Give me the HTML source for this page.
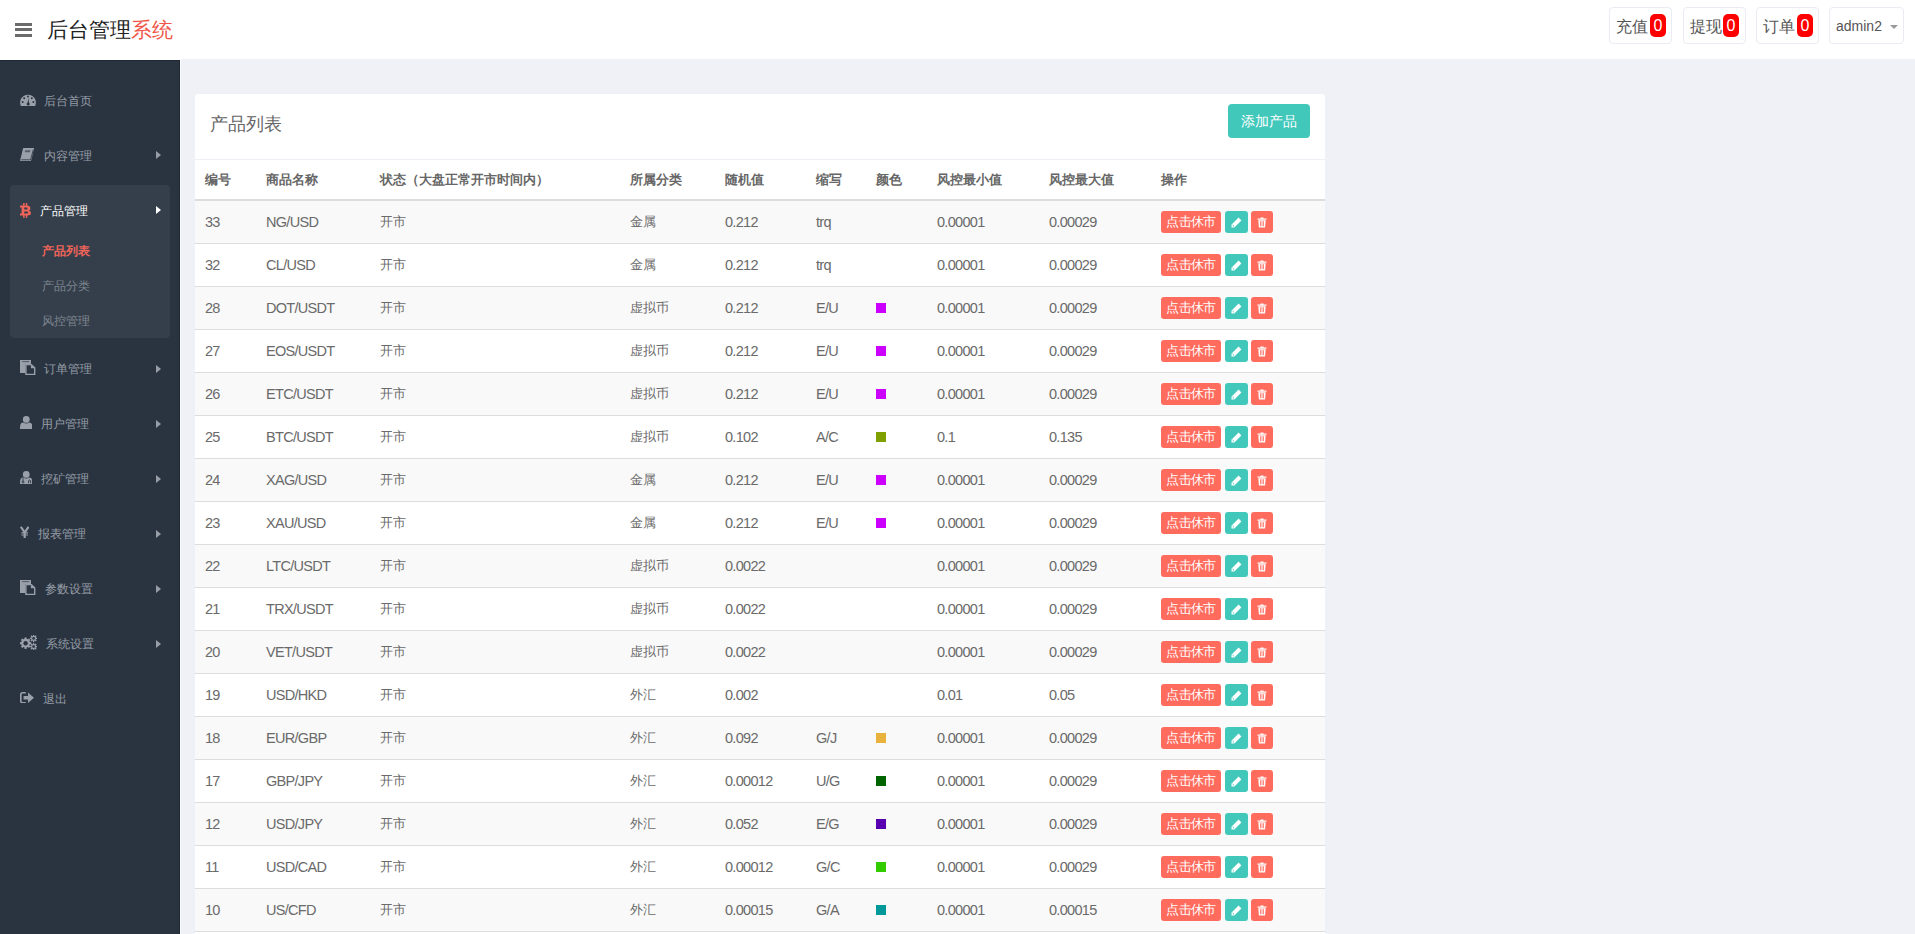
<!DOCTYPE html>
<html><head><meta charset="utf-8"><style>
*{margin:0;padding:0;box-sizing:border-box}
html,body{width:1915px;height:934px;overflow:hidden}
body{background:#f0f1f6;font-family:"Liberation Sans",sans-serif;color:#666;position:relative}
.hd{position:absolute;left:0;top:0;width:1915px;height:60px;background:#fff}
.hl{position:absolute;left:181px;top:59px;width:1734px;height:1px;background:#f0f1f6}
.vl{position:absolute;left:180px;top:60px;width:1px;height:874px;background:#fcfcff}
.bar{position:absolute;left:15px;width:17px;height:3px;background:#6b6b6b}
.title{position:absolute;left:47px;top:15px;font-size:21px;line-height:30px;color:#222;white-space:nowrap}
.title span{color:#f0574a}
.hbox{position:absolute;top:7px;height:37px;border:1px solid #ebebf3;border-radius:4px;background:#fff}
.ht{position:absolute;font-size:16px;line-height:20px;color:#555;white-space:nowrap}
.badge{position:absolute;top:14px;width:16px;height:23px;border-radius:5px;background:#f00;color:#fff;font-size:16px;line-height:23px;text-align:center}
.caret{position:absolute;left:1890px;top:25px;width:0;height:0;border-top:4px solid #999;border-left:4px solid transparent;border-right:4px solid transparent}
.sb{position:absolute;left:0;top:60px;width:180px;height:874px;background:#2a3440;border-top:1px solid #1f2935;border-right:1px solid #1f2935}
.mt{position:absolute;font-size:12px;line-height:20px;color:#969da7;white-space:nowrap}
.mt.on{color:#fff}
.ar.on{border-left-color:#fff}
.mt.sub{color:#7e8690}
.mt.sub.on{color:#f0645a;font-weight:bold}
.ar{position:absolute;left:156px;width:0;height:0;border-left:5px solid #979ea8;border-top:4px solid transparent;border-bottom:4px solid transparent}
.act{position:absolute;left:10px;top:185px;width:160px;height:153px;background:#353f4b;border-radius:4px}
.card{position:absolute;left:195px;top:94px;width:1130px;height:900px;background:#fff;border-radius:3px}
.ctitle{position:absolute;left:15px;top:18px;font-size:18px;line-height:24px;color:#666}
.addbtn{position:absolute;left:1033px;top:10px;width:82px;height:34px;background:#41c8bb;border-radius:4px;color:#fff;font-size:14px;line-height:34px;text-align:center}
.cline{position:absolute;left:0;top:65px;width:1130px;height:1px;background:#eef0f5}
table{position:absolute;left:0;top:66px;width:1130px;border-collapse:collapse;table-layout:fixed}
th,td{padding:0 0 0 10px;text-align:left;white-space:nowrap;overflow:hidden}
th{height:40px;font-size:13px;font-weight:bold;color:#666;border-bottom:2px solid #ddd;vertical-align:middle}
td{height:43px;font-size:14.5px;letter-spacing:-0.7px;color:#6a6a6a;border-bottom:1px solid #ddd;vertical-align:middle}
td.cn{font-size:13px;letter-spacing:0}
tbody tr:nth-child(odd) td{background:#f9f9f9}
.sw{display:inline-block;width:10px;height:10px;vertical-align:middle;position:relative;top:-1px}
.b1,.b2,.b3{display:inline-block;height:22px;border-radius:3px;vertical-align:middle;position:relative;color:#fff}
.b1{width:60px;background:#ff6b5d;font-size:12.5px;line-height:22px;text-align:center}
.b2{width:23px;background:#41c8bb;margin-left:4px}
.b3{width:22px;background:#ff6b5d;margin-left:3px}
</style></head><body>
<div class="hd">
<div class="bar" style="top:23px"></div><div class="bar" style="top:28.4px"></div><div class="bar" style="top:34px"></div>
<div class="title">后台管理<span>系统</span></div>
<div class="hbox" style="left:1609px;width:63px"></div><div class="ht" style="left:1616px;top:17px">充值</div><div class="badge" style="left:1650px">0</div>
<div class="hbox" style="left:1683px;width:63px"></div><div class="ht" style="left:1690px;top:17px">提现</div><div class="badge" style="left:1723px">0</div>
<div class="hbox" style="left:1756px;width:63px"></div><div class="ht" style="left:1763px;top:17px">订单</div><div class="badge" style="left:1797px">0</div>
<div class="hbox" style="left:1829px;width:75px"></div><div class="ht" style="left:1836px;top:16px;font-size:14px">admin2</div><div class="caret"></div>
</div>
<div class="hl"></div><div class="vl"></div><div class="sb"></div><div class="act"></div><svg style="position:absolute;left:19.6px;top:93.7px" width="16" height="12.4" viewBox="0 0 16 12.4"><path d="M1.1 12.4 A7.9 7.9 0 1 1 14.9 12.4 Z" fill="#99a0aa"/><circle cx="8" cy="2.6" r="1" fill="#2a3440"/><circle cx="4.2" cy="4.3" r="1" fill="#2a3440"/><circle cx="11.8" cy="4.3" r="1" fill="#2a3440"/><circle cx="2.6" cy="8" r="1" fill="#2a3440"/><circle cx="13.4" cy="8" r="1" fill="#2a3440"/><path d="M7.4 10 L8.6 3.8 L9 10 Z" fill="#2a3440"/><circle cx="8.2" cy="10" r="1.6" fill="#2a3440"/></svg><div class="mt" style="left:44px;top:91px">后台首页</div><svg style="position:absolute;left:19.6px;top:147.8px" width="14.4" height="13.3" viewBox="0 0 14.4 13.3"><path d="M3.6 0 H14.2 L11.3 12 Q10.9 13.3 9.8 13.3 H1.4 Q-0.1 13.3 0.3 11.8 L2.9 1 Q3.1 0 3.6 0 Z" fill="#99a0aa"/><path d="M1.4 11.8 H10.6 L13.3 1.6" stroke="#2a3440" stroke-width="0.8" fill="none"/><path d="M5.2 2.3 H10.5 L10.1 4.2 H4.8 Z" fill="#2a3440" opacity="0.6"/></svg><div class="mt" style="left:44px;top:146px">内容管理</div><div class="ar" style="top:151.3px"></div><svg style="position:absolute;left:20.1px;top:202.75px" width="11" height="14.9" viewBox="0 0 11 14.9"><path fill-rule="evenodd" d="M0 2.6 H6.6 Q10.4 2.6 10.4 5.4 Q10.4 7 9 7.5 Q11 8 11 10.2 Q11 12.4 7.2 12.4 H0 V10.6 H1.6 V4.4 H0 Z M4.2 4.6 V6.6 H6.4 Q7.6 6.6 7.6 5.6 Q7.6 4.6 6.4 4.6 Z M4.2 8.4 V10.4 H6.8 Q8.2 10.4 8.2 9.4 Q8.2 8.4 6.8 8.4 Z" fill="#f0645a"/><rect x="3.1" y="0" width="1.5" height="3" fill="#f0645a"/><rect x="5.8" y="0" width="1.5" height="3" fill="#f0645a"/><rect x="3.1" y="12" width="1.5" height="2.9" fill="#f0645a"/><rect x="5.8" y="12" width="1.5" height="2.9" fill="#f0645a"/></svg><div class="mt on" style="left:40px;top:201px">产品管理</div><div class="ar on" style="top:206.3px"></div><div class="mt sub on" style="left:42px;top:241px">产品列表</div><div class="mt sub" style="left:42px;top:276px">产品分类</div><div class="mt sub" style="left:42px;top:311px">风控管理</div><svg style="position:absolute;left:19.7px;top:359.6px" width="16" height="15.4" viewBox="0 0 16 15.4"><rect x="0" y="0" width="11" height="13" fill="#99a0aa"/><rect x="2.2" y="1.2" width="7" height="0.9" fill="#2a3440" opacity="0.7"/><path d="M5.2 3.9 H11.6 L15.4 7.6 V15.1 H5.2 Z" fill="#2a3440"/><path d="M5.9 4.6 H11.3 L14.7 7.9 V14.4 H5.9 Z" fill="none" stroke="#99a0aa" stroke-width="1.4"/><path d="M10.9 4.4 V8.3 H14.9 Z" fill="#99a0aa"/></svg><div class="mt" style="left:44px;top:359px">订单管理</div><div class="ar" style="top:364.5px"></div><svg style="position:absolute;left:19.6px;top:415.75px" width="12.5" height="13.4" viewBox="0 0 12.5 13.4"><circle cx="6.25" cy="3.4" r="3.4" fill="#99a0aa"/><path d="M0 11.4 Q0 6.6 3.2 6.6 Q6.25 8.4 9.3 6.6 Q12.5 6.6 12.5 11.4 V13.4 H0 Z" fill="#99a0aa"/></svg><div class="mt" style="left:41px;top:414px">用户管理</div><div class="ar" style="top:419.5px"></div><svg style="position:absolute;left:19.6px;top:470.75px" width="12.5" height="13.4" viewBox="0 0 12.5 13.4"><circle cx="6.25" cy="3.4" r="3.4" fill="#99a0aa"/><path d="M0 11.4 Q0 6.6 3.2 6.6 Q6.25 8.4 9.3 6.6 Q12.5 6.6 12.5 11.4 V13.4 H0 Z" fill="#99a0aa"/><path d="M3 7.2 V10.6" stroke="#2a3440" stroke-width="0.9" fill="none"/><circle cx="3" cy="11.1" r="1" fill="none" stroke="#2a3440" stroke-width="0.8"/><path d="M8.6 12.2 V9.6 Q9.6 8.6 10.6 9.6 V12.2" stroke="#2a3440" stroke-width="0.9" fill="none"/></svg><div class="mt" style="left:41px;top:469px">挖矿管理</div><div class="ar" style="top:474.5px"></div><svg style="position:absolute;left:19.6px;top:525.75px" width="9.4" height="12.3" viewBox="0 0 9.4 12.3"><path d="M0.8 0.8 L4.7 6.4 L8.6 0.8" stroke="#99a0aa" stroke-width="2.2" fill="none"/><path d="M4.7 6 V12.3" stroke="#99a0aa" stroke-width="2.2"/><path d="M1.4 6.9 H8 M1.4 9 H8" stroke="#99a0aa" stroke-width="1.2"/></svg><div class="mt" style="left:38px;top:524px">报表管理</div><div class="ar" style="top:529.5px"></div><svg style="position:absolute;left:19.6px;top:579.8px" width="16" height="15.4" viewBox="0 0 16 15.4"><rect x="0" y="0" width="11" height="13" fill="#99a0aa"/><rect x="2.2" y="1.2" width="7" height="0.9" fill="#2a3440" opacity="0.7"/><path d="M5.2 3.9 H11.6 L15.4 7.6 V15.1 H5.2 Z" fill="#2a3440"/><path d="M5.9 4.6 H11.3 L14.7 7.9 V14.4 H5.9 Z" fill="none" stroke="#99a0aa" stroke-width="1.4"/><path d="M10.9 4.4 V8.3 H14.9 Z" fill="#99a0aa"/></svg><div class="mt" style="left:45px;top:579px">参数设置</div><div class="ar" style="top:584.5px"></div><svg style="position:absolute;left:19.6px;top:635px" width="17" height="15" viewBox="0 0 17 15"><rect x="4.5" y="2.499999999999999" width="2.2" height="11.4" fill="#99a0aa" transform="rotate(0.0 5.6 8.2)"/><rect x="4.5" y="2.499999999999999" width="2.2" height="11.4" fill="#99a0aa" transform="rotate(45.0 5.6 8.2)"/><rect x="4.5" y="2.499999999999999" width="2.2" height="11.4" fill="#99a0aa" transform="rotate(90.0 5.6 8.2)"/><rect x="4.5" y="2.499999999999999" width="2.2" height="11.4" fill="#99a0aa" transform="rotate(135.0 5.6 8.2)"/><circle cx="5.6" cy="8.2" r="4.4" fill="#99a0aa"/><circle cx="5.6" cy="8.2" r="2.2" fill="#2a3440"/><rect x="12.95" y="-0.30000000000000004" width="1.3" height="7.4" fill="#99a0aa" transform="rotate(0.0 13.6 3.4)"/><rect x="12.95" y="-0.30000000000000004" width="1.3" height="7.4" fill="#99a0aa" transform="rotate(45.0 13.6 3.4)"/><rect x="12.95" y="-0.30000000000000004" width="1.3" height="7.4" fill="#99a0aa" transform="rotate(90.0 13.6 3.4)"/><rect x="12.95" y="-0.30000000000000004" width="1.3" height="7.4" fill="#99a0aa" transform="rotate(135.0 13.6 3.4)"/><circle cx="13.6" cy="3.4" r="2.4" fill="#99a0aa"/><circle cx="13.6" cy="3.4" r="1.35" fill="#2a3440"/><rect x="12.95" y="7.8999999999999995" width="1.3" height="7.4" fill="#99a0aa" transform="rotate(0.0 13.6 11.6)"/><rect x="12.95" y="7.8999999999999995" width="1.3" height="7.4" fill="#99a0aa" transform="rotate(45.0 13.6 11.6)"/><rect x="12.95" y="7.8999999999999995" width="1.3" height="7.4" fill="#99a0aa" transform="rotate(90.0 13.6 11.6)"/><rect x="12.95" y="7.8999999999999995" width="1.3" height="7.4" fill="#99a0aa" transform="rotate(135.0 13.6 11.6)"/><circle cx="13.6" cy="11.6" r="2.4" fill="#99a0aa"/><circle cx="13.6" cy="11.6" r="1.35" fill="#2a3440"/></svg><div class="mt" style="left:46px;top:634px">系统设置</div><div class="ar" style="top:639.5px"></div><svg style="position:absolute;left:19.6px;top:691.7px" width="14" height="11.5" viewBox="0 0 14 11.5"><path d="M5.8 0.8 H2.6 Q0.8 0.8 0.8 2.6 V8.9 Q0.8 10.7 2.6 10.7 H5.8" stroke="#99a0aa" stroke-width="1.6" fill="none"/><path d="M3.6 4 H8 V0.6 L14 5.75 L8 10.9 V7.5 H3.6 Z" fill="#99a0aa"/></svg><div class="mt" style="left:43px;top:689px">退出</div>
<div class="card"><div class="ctitle">产品列表</div><div class="addbtn">添加产品</div><div class="cline"></div><table><colgroup><col style="width:61px"><col style="width:114px"><col style="width:250px"><col style="width:95px"><col style="width:91px"><col style="width:60px"><col style="width:61px"><col style="width:112px"><col style="width:112px"><col style="width:174px"></colgroup><thead><tr><th>编号</th><th>商品名称</th><th>状态（大盘正常开市时间内）</th><th>所属分类</th><th>随机值</th><th>缩写</th><th>颜色</th><th>风控最小值</th><th>风控最大值</th><th>操作</th></tr></thead><tbody><tr><td>33</td><td>NG/USD</td><td class="cn">开市</td><td class="cn">金属</td><td>0.212</td><td>trq</td><td></td><td>0.00001</td><td>0.00029</td><td><span class="b1">点击休市</span><span class="b2"><svg width="11" height="11" viewBox="0 0 11 11" style="position:absolute;left:6px;top:6px"><path d="M7.6 0.6 L10.4 3.4 L3.4 10.4 L0.4 10.6 L0.6 7.6 Z" fill="#fff"/><path d="M1.6 8 L3 9.4" stroke="#41c8bb" stroke-width="1"/></svg></span><span class="b3"><svg width="10" height="11" viewBox="0 0 10 11" style="position:absolute;left:6px;top:6px"><path d="M3.5 0.5h3v1.2h-3z M0.5 1.5h9v1.3h-9z M1.3 3.2h7.4l-0.6 7.3h-6.2z" fill="#fff"/><path d="M3.5 4.2v5 M5 4.2v5 M6.5 4.2v5" stroke="#ff6b5d" stroke-width="0.8"/></svg></span></td></tr><tr><td>32</td><td>CL/USD</td><td class="cn">开市</td><td class="cn">金属</td><td>0.212</td><td>trq</td><td></td><td>0.00001</td><td>0.00029</td><td><span class="b1">点击休市</span><span class="b2"><svg width="11" height="11" viewBox="0 0 11 11" style="position:absolute;left:6px;top:6px"><path d="M7.6 0.6 L10.4 3.4 L3.4 10.4 L0.4 10.6 L0.6 7.6 Z" fill="#fff"/><path d="M1.6 8 L3 9.4" stroke="#41c8bb" stroke-width="1"/></svg></span><span class="b3"><svg width="10" height="11" viewBox="0 0 10 11" style="position:absolute;left:6px;top:6px"><path d="M3.5 0.5h3v1.2h-3z M0.5 1.5h9v1.3h-9z M1.3 3.2h7.4l-0.6 7.3h-6.2z" fill="#fff"/><path d="M3.5 4.2v5 M5 4.2v5 M6.5 4.2v5" stroke="#ff6b5d" stroke-width="0.8"/></svg></span></td></tr><tr><td>28</td><td>DOT/USDT</td><td class="cn">开市</td><td class="cn">虚拟币</td><td>0.212</td><td>E/U</td><td><span class="sw" style="background:#cc00ff"></span></td><td>0.00001</td><td>0.00029</td><td><span class="b1">点击休市</span><span class="b2"><svg width="11" height="11" viewBox="0 0 11 11" style="position:absolute;left:6px;top:6px"><path d="M7.6 0.6 L10.4 3.4 L3.4 10.4 L0.4 10.6 L0.6 7.6 Z" fill="#fff"/><path d="M1.6 8 L3 9.4" stroke="#41c8bb" stroke-width="1"/></svg></span><span class="b3"><svg width="10" height="11" viewBox="0 0 10 11" style="position:absolute;left:6px;top:6px"><path d="M3.5 0.5h3v1.2h-3z M0.5 1.5h9v1.3h-9z M1.3 3.2h7.4l-0.6 7.3h-6.2z" fill="#fff"/><path d="M3.5 4.2v5 M5 4.2v5 M6.5 4.2v5" stroke="#ff6b5d" stroke-width="0.8"/></svg></span></td></tr><tr><td>27</td><td>EOS/USDT</td><td class="cn">开市</td><td class="cn">虚拟币</td><td>0.212</td><td>E/U</td><td><span class="sw" style="background:#cc00ff"></span></td><td>0.00001</td><td>0.00029</td><td><span class="b1">点击休市</span><span class="b2"><svg width="11" height="11" viewBox="0 0 11 11" style="position:absolute;left:6px;top:6px"><path d="M7.6 0.6 L10.4 3.4 L3.4 10.4 L0.4 10.6 L0.6 7.6 Z" fill="#fff"/><path d="M1.6 8 L3 9.4" stroke="#41c8bb" stroke-width="1"/></svg></span><span class="b3"><svg width="10" height="11" viewBox="0 0 10 11" style="position:absolute;left:6px;top:6px"><path d="M3.5 0.5h3v1.2h-3z M0.5 1.5h9v1.3h-9z M1.3 3.2h7.4l-0.6 7.3h-6.2z" fill="#fff"/><path d="M3.5 4.2v5 M5 4.2v5 M6.5 4.2v5" stroke="#ff6b5d" stroke-width="0.8"/></svg></span></td></tr><tr><td>26</td><td>ETC/USDT</td><td class="cn">开市</td><td class="cn">虚拟币</td><td>0.212</td><td>E/U</td><td><span class="sw" style="background:#cc00ff"></span></td><td>0.00001</td><td>0.00029</td><td><span class="b1">点击休市</span><span class="b2"><svg width="11" height="11" viewBox="0 0 11 11" style="position:absolute;left:6px;top:6px"><path d="M7.6 0.6 L10.4 3.4 L3.4 10.4 L0.4 10.6 L0.6 7.6 Z" fill="#fff"/><path d="M1.6 8 L3 9.4" stroke="#41c8bb" stroke-width="1"/></svg></span><span class="b3"><svg width="10" height="11" viewBox="0 0 10 11" style="position:absolute;left:6px;top:6px"><path d="M3.5 0.5h3v1.2h-3z M0.5 1.5h9v1.3h-9z M1.3 3.2h7.4l-0.6 7.3h-6.2z" fill="#fff"/><path d="M3.5 4.2v5 M5 4.2v5 M6.5 4.2v5" stroke="#ff6b5d" stroke-width="0.8"/></svg></span></td></tr><tr><td>25</td><td>BTC/USDT</td><td class="cn">开市</td><td class="cn">虚拟币</td><td>0.102</td><td>A/C</td><td><span class="sw" style="background:#809f00"></span></td><td>0.1</td><td>0.135</td><td><span class="b1">点击休市</span><span class="b2"><svg width="11" height="11" viewBox="0 0 11 11" style="position:absolute;left:6px;top:6px"><path d="M7.6 0.6 L10.4 3.4 L3.4 10.4 L0.4 10.6 L0.6 7.6 Z" fill="#fff"/><path d="M1.6 8 L3 9.4" stroke="#41c8bb" stroke-width="1"/></svg></span><span class="b3"><svg width="10" height="11" viewBox="0 0 10 11" style="position:absolute;left:6px;top:6px"><path d="M3.5 0.5h3v1.2h-3z M0.5 1.5h9v1.3h-9z M1.3 3.2h7.4l-0.6 7.3h-6.2z" fill="#fff"/><path d="M3.5 4.2v5 M5 4.2v5 M6.5 4.2v5" stroke="#ff6b5d" stroke-width="0.8"/></svg></span></td></tr><tr><td>24</td><td>XAG/USD</td><td class="cn">开市</td><td class="cn">金属</td><td>0.212</td><td>E/U</td><td><span class="sw" style="background:#cc00ff"></span></td><td>0.00001</td><td>0.00029</td><td><span class="b1">点击休市</span><span class="b2"><svg width="11" height="11" viewBox="0 0 11 11" style="position:absolute;left:6px;top:6px"><path d="M7.6 0.6 L10.4 3.4 L3.4 10.4 L0.4 10.6 L0.6 7.6 Z" fill="#fff"/><path d="M1.6 8 L3 9.4" stroke="#41c8bb" stroke-width="1"/></svg></span><span class="b3"><svg width="10" height="11" viewBox="0 0 10 11" style="position:absolute;left:6px;top:6px"><path d="M3.5 0.5h3v1.2h-3z M0.5 1.5h9v1.3h-9z M1.3 3.2h7.4l-0.6 7.3h-6.2z" fill="#fff"/><path d="M3.5 4.2v5 M5 4.2v5 M6.5 4.2v5" stroke="#ff6b5d" stroke-width="0.8"/></svg></span></td></tr><tr><td>23</td><td>XAU/USD</td><td class="cn">开市</td><td class="cn">金属</td><td>0.212</td><td>E/U</td><td><span class="sw" style="background:#cc00ff"></span></td><td>0.00001</td><td>0.00029</td><td><span class="b1">点击休市</span><span class="b2"><svg width="11" height="11" viewBox="0 0 11 11" style="position:absolute;left:6px;top:6px"><path d="M7.6 0.6 L10.4 3.4 L3.4 10.4 L0.4 10.6 L0.6 7.6 Z" fill="#fff"/><path d="M1.6 8 L3 9.4" stroke="#41c8bb" stroke-width="1"/></svg></span><span class="b3"><svg width="10" height="11" viewBox="0 0 10 11" style="position:absolute;left:6px;top:6px"><path d="M3.5 0.5h3v1.2h-3z M0.5 1.5h9v1.3h-9z M1.3 3.2h7.4l-0.6 7.3h-6.2z" fill="#fff"/><path d="M3.5 4.2v5 M5 4.2v5 M6.5 4.2v5" stroke="#ff6b5d" stroke-width="0.8"/></svg></span></td></tr><tr><td>22</td><td>LTC/USDT</td><td class="cn">开市</td><td class="cn">虚拟币</td><td>0.0022</td><td></td><td></td><td>0.00001</td><td>0.00029</td><td><span class="b1">点击休市</span><span class="b2"><svg width="11" height="11" viewBox="0 0 11 11" style="position:absolute;left:6px;top:6px"><path d="M7.6 0.6 L10.4 3.4 L3.4 10.4 L0.4 10.6 L0.6 7.6 Z" fill="#fff"/><path d="M1.6 8 L3 9.4" stroke="#41c8bb" stroke-width="1"/></svg></span><span class="b3"><svg width="10" height="11" viewBox="0 0 10 11" style="position:absolute;left:6px;top:6px"><path d="M3.5 0.5h3v1.2h-3z M0.5 1.5h9v1.3h-9z M1.3 3.2h7.4l-0.6 7.3h-6.2z" fill="#fff"/><path d="M3.5 4.2v5 M5 4.2v5 M6.5 4.2v5" stroke="#ff6b5d" stroke-width="0.8"/></svg></span></td></tr><tr><td>21</td><td>TRX/USDT</td><td class="cn">开市</td><td class="cn">虚拟币</td><td>0.0022</td><td></td><td></td><td>0.00001</td><td>0.00029</td><td><span class="b1">点击休市</span><span class="b2"><svg width="11" height="11" viewBox="0 0 11 11" style="position:absolute;left:6px;top:6px"><path d="M7.6 0.6 L10.4 3.4 L3.4 10.4 L0.4 10.6 L0.6 7.6 Z" fill="#fff"/><path d="M1.6 8 L3 9.4" stroke="#41c8bb" stroke-width="1"/></svg></span><span class="b3"><svg width="10" height="11" viewBox="0 0 10 11" style="position:absolute;left:6px;top:6px"><path d="M3.5 0.5h3v1.2h-3z M0.5 1.5h9v1.3h-9z M1.3 3.2h7.4l-0.6 7.3h-6.2z" fill="#fff"/><path d="M3.5 4.2v5 M5 4.2v5 M6.5 4.2v5" stroke="#ff6b5d" stroke-width="0.8"/></svg></span></td></tr><tr><td>20</td><td>VET/USDT</td><td class="cn">开市</td><td class="cn">虚拟币</td><td>0.0022</td><td></td><td></td><td>0.00001</td><td>0.00029</td><td><span class="b1">点击休市</span><span class="b2"><svg width="11" height="11" viewBox="0 0 11 11" style="position:absolute;left:6px;top:6px"><path d="M7.6 0.6 L10.4 3.4 L3.4 10.4 L0.4 10.6 L0.6 7.6 Z" fill="#fff"/><path d="M1.6 8 L3 9.4" stroke="#41c8bb" stroke-width="1"/></svg></span><span class="b3"><svg width="10" height="11" viewBox="0 0 10 11" style="position:absolute;left:6px;top:6px"><path d="M3.5 0.5h3v1.2h-3z M0.5 1.5h9v1.3h-9z M1.3 3.2h7.4l-0.6 7.3h-6.2z" fill="#fff"/><path d="M3.5 4.2v5 M5 4.2v5 M6.5 4.2v5" stroke="#ff6b5d" stroke-width="0.8"/></svg></span></td></tr><tr><td>19</td><td>USD/HKD</td><td class="cn">开市</td><td class="cn">外汇</td><td>0.002</td><td></td><td></td><td>0.01</td><td>0.05</td><td><span class="b1">点击休市</span><span class="b2"><svg width="11" height="11" viewBox="0 0 11 11" style="position:absolute;left:6px;top:6px"><path d="M7.6 0.6 L10.4 3.4 L3.4 10.4 L0.4 10.6 L0.6 7.6 Z" fill="#fff"/><path d="M1.6 8 L3 9.4" stroke="#41c8bb" stroke-width="1"/></svg></span><span class="b3"><svg width="10" height="11" viewBox="0 0 10 11" style="position:absolute;left:6px;top:6px"><path d="M3.5 0.5h3v1.2h-3z M0.5 1.5h9v1.3h-9z M1.3 3.2h7.4l-0.6 7.3h-6.2z" fill="#fff"/><path d="M3.5 4.2v5 M5 4.2v5 M6.5 4.2v5" stroke="#ff6b5d" stroke-width="0.8"/></svg></span></td></tr><tr><td>18</td><td>EUR/GBP</td><td class="cn">开市</td><td class="cn">外汇</td><td>0.092</td><td>G/J</td><td><span class="sw" style="background:#e8b23c"></span></td><td>0.00001</td><td>0.00029</td><td><span class="b1">点击休市</span><span class="b2"><svg width="11" height="11" viewBox="0 0 11 11" style="position:absolute;left:6px;top:6px"><path d="M7.6 0.6 L10.4 3.4 L3.4 10.4 L0.4 10.6 L0.6 7.6 Z" fill="#fff"/><path d="M1.6 8 L3 9.4" stroke="#41c8bb" stroke-width="1"/></svg></span><span class="b3"><svg width="10" height="11" viewBox="0 0 10 11" style="position:absolute;left:6px;top:6px"><path d="M3.5 0.5h3v1.2h-3z M0.5 1.5h9v1.3h-9z M1.3 3.2h7.4l-0.6 7.3h-6.2z" fill="#fff"/><path d="M3.5 4.2v5 M5 4.2v5 M6.5 4.2v5" stroke="#ff6b5d" stroke-width="0.8"/></svg></span></td></tr><tr><td>17</td><td>GBP/JPY</td><td class="cn">开市</td><td class="cn">外汇</td><td>0.00012</td><td>U/G</td><td><span class="sw" style="background:#006400"></span></td><td>0.00001</td><td>0.00029</td><td><span class="b1">点击休市</span><span class="b2"><svg width="11" height="11" viewBox="0 0 11 11" style="position:absolute;left:6px;top:6px"><path d="M7.6 0.6 L10.4 3.4 L3.4 10.4 L0.4 10.6 L0.6 7.6 Z" fill="#fff"/><path d="M1.6 8 L3 9.4" stroke="#41c8bb" stroke-width="1"/></svg></span><span class="b3"><svg width="10" height="11" viewBox="0 0 10 11" style="position:absolute;left:6px;top:6px"><path d="M3.5 0.5h3v1.2h-3z M0.5 1.5h9v1.3h-9z M1.3 3.2h7.4l-0.6 7.3h-6.2z" fill="#fff"/><path d="M3.5 4.2v5 M5 4.2v5 M6.5 4.2v5" stroke="#ff6b5d" stroke-width="0.8"/></svg></span></td></tr><tr><td>12</td><td>USD/JPY</td><td class="cn">开市</td><td class="cn">外汇</td><td>0.052</td><td>E/G</td><td><span class="sw" style="background:#5800b0"></span></td><td>0.00001</td><td>0.00029</td><td><span class="b1">点击休市</span><span class="b2"><svg width="11" height="11" viewBox="0 0 11 11" style="position:absolute;left:6px;top:6px"><path d="M7.6 0.6 L10.4 3.4 L3.4 10.4 L0.4 10.6 L0.6 7.6 Z" fill="#fff"/><path d="M1.6 8 L3 9.4" stroke="#41c8bb" stroke-width="1"/></svg></span><span class="b3"><svg width="10" height="11" viewBox="0 0 10 11" style="position:absolute;left:6px;top:6px"><path d="M3.5 0.5h3v1.2h-3z M0.5 1.5h9v1.3h-9z M1.3 3.2h7.4l-0.6 7.3h-6.2z" fill="#fff"/><path d="M3.5 4.2v5 M5 4.2v5 M6.5 4.2v5" stroke="#ff6b5d" stroke-width="0.8"/></svg></span></td></tr><tr><td>11</td><td>USD/CAD</td><td class="cn">开市</td><td class="cn">外汇</td><td>0.00012</td><td>G/C</td><td><span class="sw" style="background:#33cc00"></span></td><td>0.00001</td><td>0.00029</td><td><span class="b1">点击休市</span><span class="b2"><svg width="11" height="11" viewBox="0 0 11 11" style="position:absolute;left:6px;top:6px"><path d="M7.6 0.6 L10.4 3.4 L3.4 10.4 L0.4 10.6 L0.6 7.6 Z" fill="#fff"/><path d="M1.6 8 L3 9.4" stroke="#41c8bb" stroke-width="1"/></svg></span><span class="b3"><svg width="10" height="11" viewBox="0 0 10 11" style="position:absolute;left:6px;top:6px"><path d="M3.5 0.5h3v1.2h-3z M0.5 1.5h9v1.3h-9z M1.3 3.2h7.4l-0.6 7.3h-6.2z" fill="#fff"/><path d="M3.5 4.2v5 M5 4.2v5 M6.5 4.2v5" stroke="#ff6b5d" stroke-width="0.8"/></svg></span></td></tr><tr><td>10</td><td>US/CFD</td><td class="cn">开市</td><td class="cn">外汇</td><td>0.00015</td><td>G/A</td><td><span class="sw" style="background:#009999"></span></td><td>0.00001</td><td>0.00015</td><td><span class="b1">点击休市</span><span class="b2"><svg width="11" height="11" viewBox="0 0 11 11" style="position:absolute;left:6px;top:6px"><path d="M7.6 0.6 L10.4 3.4 L3.4 10.4 L0.4 10.6 L0.6 7.6 Z" fill="#fff"/><path d="M1.6 8 L3 9.4" stroke="#41c8bb" stroke-width="1"/></svg></span><span class="b3"><svg width="10" height="11" viewBox="0 0 10 11" style="position:absolute;left:6px;top:6px"><path d="M3.5 0.5h3v1.2h-3z M0.5 1.5h9v1.3h-9z M1.3 3.2h7.4l-0.6 7.3h-6.2z" fill="#fff"/><path d="M3.5 4.2v5 M5 4.2v5 M6.5 4.2v5" stroke="#ff6b5d" stroke-width="0.8"/></svg></span></td></tr><tr><td>9</td><td>AUD/USD</td><td class="cn">开市</td><td class="cn">外汇</td><td>0.00012</td><td>G/C</td><td><span class="sw" style="background:#33cc00"></span></td><td>0.00001</td><td>0.00029</td><td><span class="b1">点击休市</span><span class="b2"><svg width="11" height="11" viewBox="0 0 11 11" style="position:absolute;left:6px;top:6px"><path d="M7.6 0.6 L10.4 3.4 L3.4 10.4 L0.4 10.6 L0.6 7.6 Z" fill="#fff"/><path d="M1.6 8 L3 9.4" stroke="#41c8bb" stroke-width="1"/></svg></span><span class="b3"><svg width="10" height="11" viewBox="0 0 10 11" style="position:absolute;left:6px;top:6px"><path d="M3.5 0.5h3v1.2h-3z M0.5 1.5h9v1.3h-9z M1.3 3.2h7.4l-0.6 7.3h-6.2z" fill="#fff"/><path d="M3.5 4.2v5 M5 4.2v5 M6.5 4.2v5" stroke="#ff6b5d" stroke-width="0.8"/></svg></span></td></tr></tbody></table></div>
</body></html>
